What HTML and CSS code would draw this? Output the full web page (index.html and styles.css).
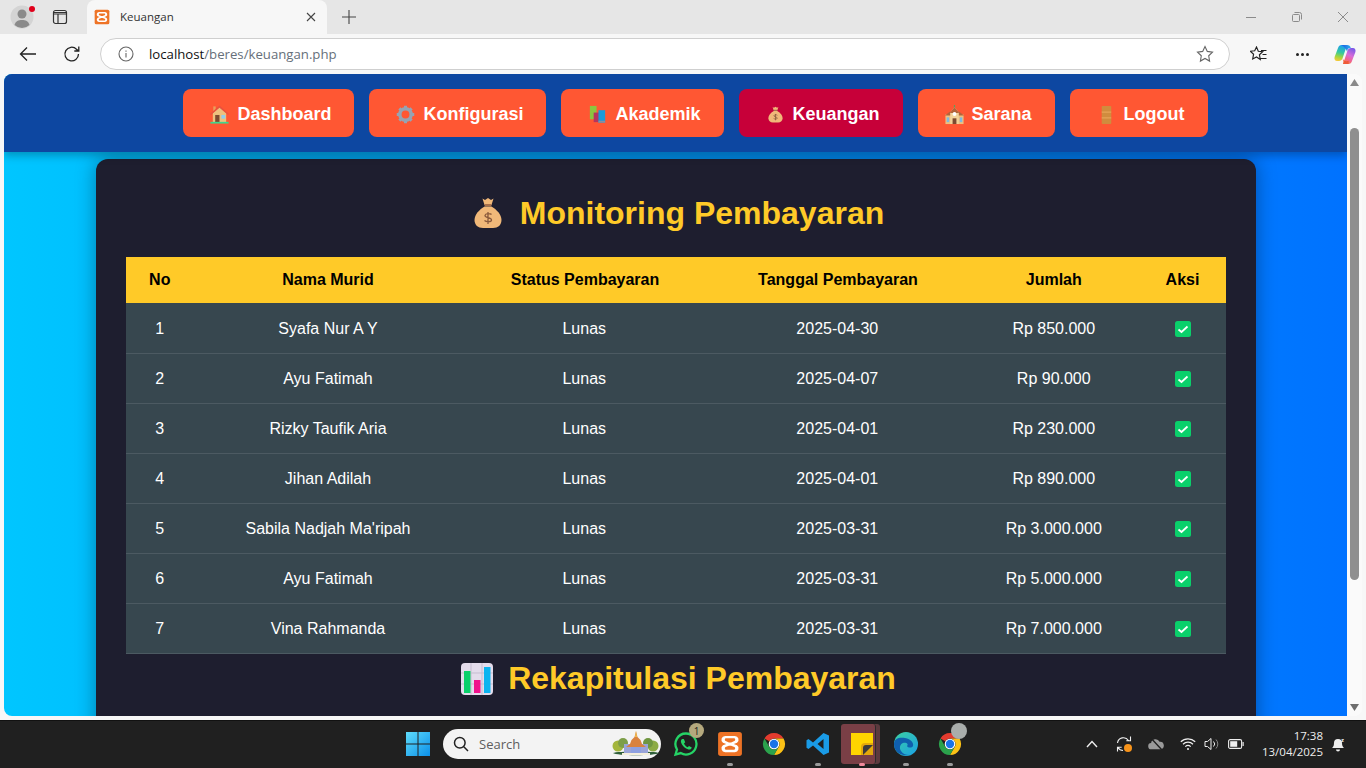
FILE: index.html
```html
<!DOCTYPE html>
<html lang="id">
<head>
<meta charset="utf-8">
<title>Keuangan</title>
<link rel="stylesheet" href="styles.css">
</head>
<body>
<svg class="defs" width="0" height="0" aria-hidden="true">
  <symbol id="xampp" viewBox="0 0 24 24">
    <rect x="1" y="1" width="22" height="22" rx="2.500" fill="#ee7326"/>
    <path d="M7.500 4.500h9a3.500 3.500 0 0 1 2 6.300L15.500 12l3 1.200a3.500 3.500 0 0 1-2 6.300h-9a3.500 3.500 0 0 1-2-6.300l3-1.200-3-1.200a3.500 3.500 0 0 1 2-6.300z M8 6.800a1.300 1.300 0 0 0 0 2.400l3 1.300h2l3-1.300a1.300 1.300 0 0 0 0-2.400z M11 13.500l-3 1.300a1.300 1.300 0 0 0 0 2.400h8a1.300 1.300 0 0 0 0-2.400l-3-1.300z" fill="#fff" fill-rule="evenodd"/>
  </symbol>
  <symbol id="chrome" viewBox="0 0 24 24">
    <path d="M12 1a11 11 0 0 1 9.530 5.500H12a5.500 5.500 0 0 0-4.760 2.750L2.470 6.500A11 11 0 0 1 12 1z" fill="#e33b2e"/>
    <path d="M21.530 6.500A11 11 0 0 1 12 23l4.760-8.250A5.500 5.500 0 0 0 16.760 9.250 5.500 5.500 0 0 0 12 6.500z" fill="#fbc116"/>
    <path d="M12 23A11 11 0 0 1 2.470 6.500l4.770 8.250A5.500 5.500 0 0 0 12 17.500a5.500 5.500 0 0 0 4.760-2.750z" fill="#2ba24c"/>
    <circle cx="12" cy="12" r="5.300" fill="#fff"/>
    <circle cx="12" cy="12" r="4.200" fill="#1a73e8"/>
  </symbol>
  <symbol id="check" viewBox="0 0 16 16">
    <rect x="0" y="0" width="16" height="16" rx="2.500" fill="#0ad06b"/>
    <path d="M3.500 8.500 6.500 11l6-5.500" fill="none" stroke="#fff" stroke-width="1.700"/>
  </symbol>
  <symbol id="bag" viewBox="0 0 32 32">
    <path d="M10.500 1.500 13 3l3-2 3 2 2.500-1.500L19.500 8h-7z" fill="#f0b879"/>
    <rect x="12.500" y="7" width="7" height="2.200" rx="1" fill="#a8704a"/>
    <path d="M12.500 9.500h7C24.500 12.500 29.500 17.500 29.500 23 29.500 28 26 31 21 31H11C6 31 2.500 28 2.500 23 2.500 17.500 7.500 12.500 12.500 9.500z" fill="#f0b879"/>
  </symbol>
</svg>

<div class="window">
  <header class="tabstrip">
    <div class="profile">
      <svg width="24" height="24" viewBox="0 0 24 24"><circle cx="12" cy="12" r="11.500" fill="#d4d4d4"/><circle cx="12" cy="9" r="4.500" fill="#8a8a8a"/><path d="M4.500 20c1-4 4-5 7.500-5s6.500 1 7.500 5a11 11 0 0 1-15 0z" fill="#8a8a8a"/></svg>
      <span class="profile-dot"></span>
    </div>
    <div class="strip-btn">
      <svg width="16" height="16" viewBox="0 0 16 16" fill="none" stroke="#333" stroke-width="1.200"><rect x="1.500" y="1.500" width="13" height="13" rx="2"/><path d="M1.500 3.500h13M1.500 5h13M6 5v9.500"/></svg>
    </div>
    <div class="tab">
      <svg class="tab-icon" width="16" height="16"><use href="#xampp"/></svg>
      <span class="tab-title">Keuangan</span>
      <svg width="10" height="10" viewBox="0 0 10 10" stroke="#444" stroke-width="1.100"><path d="M1 1l8 8M9 1l-8 8"/></svg>
    </div>
    <div class="new-tab">
      <svg width="14" height="14" viewBox="0 0 14 14" stroke="#444" stroke-width="1.100"><path d="M7 0v14M0 7h14"/></svg>
    </div>
    <div class="win-controls">
      <svg width="10" height="10" viewBox="0 0 10 10" stroke="#8b8b8b"><path d="M0 5.500h10"/></svg>
      <svg width="10" height="10" viewBox="0 0 10 10" fill="none" stroke="#8b8b8b"><rect x=".5" y="2.500" width="7" height="7" rx="1"/><path d="M2.500 .5h5a2 2 0 0 1 2 2v5"/></svg>
      <svg width="10" height="10" viewBox="0 0 10 10" stroke="#8b8b8b"><path d="M0 0l10 10M10 0L0 10"/></svg>
    </div>
  </header>

  <div class="toolbar">
    <svg class="tool-back" width="18" height="16" viewBox="0 0 18 16" fill="none" stroke="#222" stroke-width="1.300"><path d="M17 8H1.500M8 1.500 1.500 8 8 14.500"/></svg>
    <svg class="tool-reload" width="18" height="18" viewBox="0 0 18 18" fill="none" stroke="#222" stroke-width="1.300"><path d="M15.500 9a6.800 6.800 0 1 1-2-4.800L15.500 6M15.800 1.500V6h-4.500"/></svg>
    <div class="omnibox">
      <svg width="16" height="16" viewBox="0 0 16 16" fill="none" stroke="#666" stroke-width="1.100"><circle cx="8" cy="8" r="7"/><path d="M8 7v4.500M8 4.500v1.200"/></svg>
      <span class="url"><span class="url-host">localhost</span>/beres/keuangan.php</span>
      <svg class="omni-star" width="18" height="18" viewBox="0 0 18 18" fill="none" stroke="#666" stroke-width="1.100"><path d="M9 1.500l2.300 4.900 5.200.7-3.800 3.700.9 5.300L9 13.500l-4.600 2.600.9-5.300L1.500 7.100l5.200-.7z"/></svg>
    </div>
    <svg class="tool-fav" width="17" height="17" viewBox="0 0 17 17" fill="none" stroke="#222" stroke-width="1.150"><path d="M6.500 1l1.800 4.200 4.400.5-3.300 3 .9 4.800-3.800-2.500L2.700 13l.9-4.800-3.300-3 4.400-.5zM11 4.500h5.500M12.500 8.500h4M10.500 12.500h6"/></svg>
    <div class="tool-more"><span></span><span></span><span></span></div>
    <svg class="tool-copilot" width="22" height="21" viewBox="0 0 22 21">
      <defs>
        <linearGradient id="cpA" x1="0.500" y1="0" x2="0.300" y2="1"><stop offset="0" stop-color="#1c9cf0"/><stop offset=".45" stop-color="#34c8a0"/><stop offset=".75" stop-color="#a4d63c"/><stop offset="1" stop-color="#f6c93a"/></linearGradient>
        <linearGradient id="cpB" x1="0.700" y1="0" x2="0.300" y2="1"><stop offset="0" stop-color="#7a5ae8"/><stop offset=".45" stop-color="#d76cd8"/><stop offset=".75" stop-color="#f2648c"/><stop offset="1" stop-color="#f28a3c"/></linearGradient>
        <linearGradient id="cpC" x1="0" y1="0" x2="1" y2="0"><stop offset="0" stop-color="#1a55e0"/><stop offset="1" stop-color="#2fb0f0"/></linearGradient>
      </defs>
      <path d="M7.500 1H13L8.500 14.500C8 16 6.500 17 5 17H3C1 17 0 15 .6 13L4 4C4.600 2 5.800 1 7.500 1z" fill="url(#cpA)"/>
      <path d="M14.500 20H9l4.500-13.500C14 5 15.500 4 17 4h2c2 0 3 2 2.400 4L18 17c-.6 2-1.800 3-3.500 3z" fill="url(#cpB)"/>
      <path d="M7.500 1h5.500c2 0 3.500 1.200 3.800 3-2-.2-3 .6-3.400 2L13 7.500C12.500 5 10 2.500 7.500 1z" fill="url(#cpC)"/>
      <path d="M8.500 14.500c1 2 3 3 5.500 2.500l.7-.2-.2 3.200H9c1-1 .5-3.500-.5-5.500z" fill="#ef5a3a"/>
    </svg>
  </div>

  <div class="viewport">
    <main class="page">
      <nav class="nav">
        <a class="nav-btn">
          <svg class="emoji" viewBox="0 0 22 20"><rect x="4.500" y="1.500" width="2.500" height="5" fill="#e9a05c"/><path d="M4 8.500 11 2.500l7 6V18H4z" fill="#eec07e"/><path d="M1.500 10 11 1.800 20.500 10" fill="none" stroke="#e8523f" stroke-width="1.700"/><rect x="6.500" y="10.500" width="4.500" height="7.500" fill="#7c4a30"/><rect x="13" y="10.500" width="4" height="3.800" fill="#8fcdf0"/><rect x="1.500" y="17.700" width="19" height="1.800" fill="#3fd68c"/></svg>
          <span>Dashboard</span>
        </a>
        <a class="nav-btn">
          <svg class="emoji" viewBox="-1 -1 24 24"><circle cx="11" cy="11" r="6.500" fill="none" stroke="#97a3b2" stroke-width="4"/><path d="M11 1v20M1 11h20M4 4l14 14M18 4 4 18" stroke="#97a3b2" stroke-width="3.400" stroke-dasharray="3.500 13.300"/><circle cx="11" cy="11" r="3" fill="#ff5733"/></svg>
          <span>Konfigurasi</span>
        </a>
        <a class="nav-btn">
          <svg class="emoji" viewBox="0 0 22 22"><rect x="3" y="2" width="7" height="14" fill="#8cc63f"/><rect x="7" y="9" width="7" height="10" fill="#b5355e"/><rect x="12" y="6.500" width="7" height="13" fill="#1a9bd8"/><rect x="12" y="17.500" width="7" height="2" fill="#8a8fa0"/></svg>
          <span>Akademik</span>
        </a>
        <a class="nav-btn nav-btn-active">
          <svg class="emoji" viewBox="-4 -2 40 36"><use href="#bag" width="32" height="32"/><path d="M16 15v12M19.500 17.500c-1-1.300-6-1.500-6.500.8-.4 2.800 6.500 1.700 6.500 4.700 0 2.200-5.300 2.200-7 .5" fill="none" stroke="#8a5a3c" stroke-width="1.500"/></svg>
          <span>Keuangan</span>
        </a>
        <a class="nav-btn">
          <svg class="emoji" viewBox="0 0 22 22"><path d="M11 1v4" stroke="#58a55c" stroke-width="1.200"/><rect x="1.500" y="11" width="19" height="10" fill="#eec07e"/><path d="M1 12l5-4h10l5 4z" fill="#b4633a"/><path d="M11 3.500 6.500 9v12h9V9z" fill="#f3d29a"/><path d="M11 3.500 6 9.500h10z" fill="#b4633a"/><circle cx="11" cy="10.500" r="2" fill="#fff"/><rect x="2.800" y="14" width="2.700" height="5" fill="#7fb8e0"/><rect x="16.500" y="14" width="2.700" height="5" fill="#7fb8e0"/><rect x="9" y="15" width="4" height="6" fill="#7c4a30"/></svg>
          <span>Sarana</span>
        </a>
        <a class="nav-btn">
          <svg class="emoji" viewBox="0 0 22 22"><rect x="6" y="2" width="10" height="19" rx="1" fill="#d08c3e"/><path d="M6 8.500h10M6 14.500h10" stroke="#e6a257" stroke-width="1.200"/></svg>
          <span>Logout</span>
        </a>
      </nav>

      <section class="card">
        <h2 class="title">
          <svg class="title-icon" viewBox="0 0 32 32"><use href="#bag" width="32" height="32"/><path d="M16 15v12M19.500 17.500c-1-1.300-6-1.500-6.500.8-.4 2.800 6.500 1.700 6.500 4.700 0 2.200-5.300 2.200-7 .5" fill="none" stroke="#8a5a3c" stroke-width="1.300"/></svg>
          <span>Monitoring Pembayaran</span>
        </h2>
        <table class="table">
          <colgroup>
            <col class="c-no"><col class="c-name"><col class="c-status"><col class="c-date"><col class="c-sum"><col class="c-act">
          </colgroup>
          <thead>
            <tr><th>No</th><th>Nama Murid</th><th>Status Pembayaran</th><th>Tanggal Pembayaran</th><th>Jumlah</th><th>Aksi</th></tr>
          </thead>
          <tbody>
            <tr><td>1</td><td>Syafa Nur A Y</td><td class="nudge">Lunas</td><td class="nudge">2025-04-30</td><td>Rp 850.000</td><td><svg class="check" width="16" height="16"><use href="#check"/></svg></td></tr>
            <tr><td>2</td><td>Ayu Fatimah</td><td class="nudge">Lunas</td><td class="nudge">2025-04-07</td><td>Rp 90.000</td><td><svg class="check" width="16" height="16"><use href="#check"/></svg></td></tr>
            <tr><td>3</td><td>Rizky Taufik Aria</td><td class="nudge">Lunas</td><td class="nudge">2025-04-01</td><td>Rp 230.000</td><td><svg class="check" width="16" height="16"><use href="#check"/></svg></td></tr>
            <tr><td>4</td><td>Jihan Adilah</td><td class="nudge">Lunas</td><td class="nudge">2025-04-01</td><td>Rp 890.000</td><td><svg class="check" width="16" height="16"><use href="#check"/></svg></td></tr>
            <tr><td>5</td><td>Sabila Nadjah Ma'ripah</td><td class="nudge">Lunas</td><td class="nudge">2025-03-31</td><td>Rp 3.000.000</td><td><svg class="check" width="16" height="16"><use href="#check"/></svg></td></tr>
            <tr><td>6</td><td>Ayu Fatimah</td><td class="nudge">Lunas</td><td class="nudge">2025-03-31</td><td>Rp 5.000.000</td><td><svg class="check" width="16" height="16"><use href="#check"/></svg></td></tr>
            <tr><td>7</td><td>Vina Rahmanda</td><td class="nudge">Lunas</td><td class="nudge">2025-03-31</td><td>Rp 7.000.000</td><td><svg class="check" width="16" height="16"><use href="#check"/></svg></td></tr>
          </tbody>
        </table>
        <h2 class="title title-second">
          <svg class="title-icon" viewBox="0 0 32 32"><rect x="0" y="0" width="32" height="32" rx="4" fill="#e4dcec"/><path d="M0 10h32M0 21h32M10 0v32M21 0v32" stroke="#c5bdd0" stroke-width="1"/><rect x="3" y="8" width="6.500" height="22" fill="#0ad06b"/><rect x="13" y="17" width="6.500" height="13" fill="#f0128c"/><rect x="23" y="4" width="6.500" height="26" fill="#0bb4f0"/></svg>
          <span>Rekapitulasi Pembayaran</span>
        </h2>
      </section>
    </main>
    <aside class="scrollbar">
      <svg class="sb-arrow" width="9" height="7" viewBox="0 0 9 7"><path d="M4.500 0 9 7H0z" fill="#8a8a8a"/></svg>
      <div class="sb-track"><div class="sb-thumb"></div></div>
      <svg class="sb-arrow" width="9" height="7" viewBox="0 0 9 7"><path d="M0 0h9L4.500 7z" fill="#6e6e6e"/></svg>
    </aside>
  </div>

  <footer class="taskbar">
    <svg class="start" width="24" height="24" viewBox="0 0 24 24"><defs><linearGradient id="winG" x1="0" y1="0" x2="1" y2="1"><stop offset="0" stop-color="#5fdcfb"/><stop offset="1" stop-color="#0b8fe8"/></linearGradient></defs><path d="M0 0h11.500v11.500H0zM12.500 0H24v11.500H12.500zM0 12.500h11.500V24H0zM12.500 12.500H24V24H12.500z" fill="url(#winG)"/></svg>
    <div class="search">
      <svg width="16" height="16" viewBox="0 0 16 16" fill="none" stroke="#222" stroke-width="1.500"><circle cx="6.800" cy="6.800" r="5.300"/><path d="M10.800 10.800 15 15"/></svg>
      <span class="search-text">Search</span>
      <svg class="search-art" width="48" height="26" viewBox="0 0 48 26">
        <path d="M1 22c4-2 42-2 46 0-3 3-43 3-46 0z" fill="#2f5f3a"/>
        <circle cx="6" cy="15" r="5.500" fill="#a4b63c"/><circle cx="11" cy="12" r="5" fill="#7d9e49"/>
        <circle cx="41" cy="15" r="5.500" fill="#8cab44"/><circle cx="36" cy="12" r="5" fill="#6f9640"/>
        <rect x="12" y="13" width="24" height="9" fill="#9aa4d8"/>
        <path d="M24 0l1.500 6 3 3 1.500 4 4 3H14l4-3 1.500-4 3-3z" fill="#d9823f"/>
        <path d="M24 0l1 6h-2z" fill="#f2c14e"/>
        <rect x="19" y="16" width="10" height="6" fill="#8ea0e0"/>
        <path d="M10 22h28v2H10z" fill="#f5efdc"/>
      </svg>
    </div>
    <div class="tray-apps">
      <div class="app">
        <svg width="26" height="26" viewBox="0 0 26 26" fill="none"><path d="M13 2.500A10.500 10.500 0 0 0 4 18.500L2.500 23.500l5.200-1.400A10.500 10.500 0 1 0 13 2.500z" stroke="#25d366" stroke-width="2.300"/><path d="M9 8c-1.500 1-1.500 3 0 5.500s4 4.500 6.500 5c2 .3 3-.8 3.300-2l-2.800-1.500-1.300 1.300c-1.500-.6-3-2.100-3.700-3.800l1.200-1.200L10.800 8z" fill="#25d366"/></svg>
        <span class="badge">1</span>
      </div>
      <div class="app"><svg width="26" height="26"><use href="#xampp"/></svg><span class="dot"></span></div>
      <div class="app"><svg width="24" height="24"><use href="#chrome"/></svg></div>
      <div class="app">
        <svg width="24" height="24" viewBox="0 0 24 24"><path d="M17.500 1 23 3.500v17L17.500 23 7 13.500 2.500 17 .5 15.800V8.200L2.500 7 7 10.500zM17.500 7l-6 5 6 5z" fill="#1a9be6" fill-rule="evenodd"/></svg>
        <span class="dot"></span>
      </div>
      <div class="app app-active">
        <span class="app-edge"></span>
        <span class="app-tile"></span>
        <svg class="app-glyph" width="24" height="24" viewBox="0 0 24 24"><path d="M1 1h22v22H1z" fill="#ffd400"/><path d="M23 11v12H11V15a4 4 0 0 1 4-4z" fill="#e3a80c"/><path d="M23 13h-7a3 3 0 0 0-3 3v7z" fill="#3b3b3b"/></svg>
        <span class="dot dot-active"></span>
      </div>
      <div class="app">
        <svg width="26" height="26" viewBox="0 0 26 26"><defs><linearGradient id="edgeA" x1="0" y1="0" x2="1" y2="1"><stop offset="0" stop-color="#3cd0a0"/><stop offset="1" stop-color="#1aa0e8"/></linearGradient></defs><circle cx="13" cy="13" r="12" fill="url(#edgeA)"/><path d="M1 13C1 7 7 6 12 7c6 1 9 5 8 8-1 2-5 2-6 0 2-2-1-4-4-3-3 1-4 5-2 8 2 3 5 4 8 4C6 25 1 20 1 13z" fill="#0f5fae"/></svg>
        <span class="dot"></span>
      </div>
      <div class="app">
        <svg width="24" height="24"><use href="#chrome"/></svg>
        <span class="badge badge-gray"></span>
        <span class="dot"></span>
      </div>
    </div>
    <div class="tray">
      <svg class="t-chev" width="12" height="8" viewBox="0 0 12 8" fill="none" stroke="#eee" stroke-width="1.400"><path d="M1 7l5-5.500L11 7"/></svg>
      <div class="t-sync">
        <svg width="16" height="18" viewBox="0 0 16 18" fill="none" stroke="#eee" stroke-width="1.100"><path d="M1.500 8a6 6 0 0 1 11-2.500M14.500 1.500v4.200h-4.200M1.500 16.500v-4.200h4.200M2 12.500A6 6 0 0 0 7 15.500"/></svg>
        <span class="t-sync-dot"></span>
      </div>
      <svg class="t-cloud" width="16" height="14" viewBox="0 0 18 14"><path d="M4 13a3.500 3.500 0 0 1-.5-7A5 5 0 0 1 13 4.500 4.200 4.200 0 0 1 14 13z" fill="#9a9a9a"/><path d="M3 0l13 14" stroke="#202020" stroke-width="1.500"/></svg>
      <svg class="t-wifi" width="16" height="14" viewBox="0 0 16 14" fill="none" stroke="#eee" stroke-width="1.200"><path d="M.8 4.800a10.300 10.300 0 0 1 14.400 0M3 7.200a7.200 7.200 0 0 1 10 0M5.300 9.600a4 4 0 0 1 5.400 0"/><circle cx="8" cy="12" r="1" fill="#eee" stroke="none"/></svg>
      <svg class="t-vol" width="16" height="14" viewBox="0 0 16 14" fill="none" stroke="#eee" stroke-width="1"><path d="M1 4.500h2.500L7 1.500v11l-3.500-3H1z"/><path d="M9.500 4.500a3.500 3.500 0 0 1 0 5"/><path d="M12 2.500a6.500 6.500 0 0 1 0 9" stroke="#8a8a8a"/></svg>
      <svg class="t-bat" width="16" height="10" viewBox="0 0 16 10"><rect x=".6" y=".6" width="13" height="8.800" rx="1.500" fill="none" stroke="#eee" stroke-width="1.100"/><rect x="2.200" y="2.200" width="7" height="5.600" fill="#eee"/><rect x="14.500" y="3" width="1.200" height="4" fill="#eee"/></svg>
      <div class="clock"><span>17:38</span><span>13/04/2025</span></div>
      <svg class="t-bell" width="14" height="16" viewBox="0 0 14 16"><path d="M6 3a4 4 0 0 0-4 4c0 3-1 4-2 5h12c-1-1-2-2-2-5a4 4 0 0 0-4-4zM4 13.500h4a2 2 0 0 1-4 0z" fill="#eee"/><text class="t-bell-z" x="9" y="6">z</text></svg>
    </div>
  </footer>
</div>
</body>
</html>
```
FILE: styles.css
```css
* { box-sizing: border-box; }
html, body { margin: 0; padding: 0; height: 100%; overflow: hidden; }
body { font-family: "Liberation Sans", Arial, sans-serif; }
.defs { display: block; height: 0; }

.window { width: 1366px; height: 768px; display: flex; flex-direction: column; background: #f7f7f7; overflow: hidden; }

/* Browser tab strip */
.tabstrip { height: 34px; flex: none; background: #e6e6e6; display: flex; align-items: center; padding: 0 0 0 10px; }
.profile { position: relative; width: 24px; height: 24px; flex: none; }
.profile-dot { position: absolute; top: 1px; right: -1px; width: 6px; height: 6px; border-radius: 50%; background: #e0001b; }
.strip-btn { width: 16px; height: 16px; margin-left: 18px; flex: none; }
.tab { height: 34px; width: 240px; margin-left: 19px; background: #f7f7f7; border-radius: 8px 8px 0 0; display: flex; align-items: center; padding: 0 11px 0 7px; align-self: flex-end; flex: none; }
.tab-icon { flex: none; }
.tab-title { flex: 1; margin: 0 0 2px 10px; font: 400 11.500px "Open Sans", sans-serif; color: #333; }
.new-tab { margin-left: 15px; width: 14px; height: 14px; flex: none; display: flex; }
.win-controls { margin-left: auto; display: flex; gap: 36px; padding-right: 18px; }

/* Toolbar */
.toolbar { height: 40px; flex: none; background: #f7f7f7; display: flex; align-items: center; }
.tool-back { margin-left: 19px; flex: none; }
.tool-reload { margin-left: 26px; flex: none; }
.omnibox { width: 1130px; height: 32px; margin-left: 19px; flex: none; background: #fff; border: 1px solid #cfcfcf; border-radius: 16px; display: flex; align-items: center; padding: 0 15px 0 17px; }
.url { margin-left: 15px; font: 400 13.200px "Open Sans", sans-serif; color: #666f7a; flex: 1; }
.url-host { color: #111; }
.omni-star { flex: none; }
.tool-fav { margin-left: 20px; flex: none; }
.tool-more { margin-left: 29px; display: flex; gap: 2px; flex: none; }
.tool-more span { width: 3px; height: 3px; border-radius: 50%; background: #222; }
.tool-copilot { margin-left: 25px; flex: none; }

/* Rendered page */
.viewport { flex: none; height: 642px; margin: 0 4px 4px; display: flex; border-radius: 8px; overflow: hidden; background: #fafafa; }
.page { width: 1343px; flex: none; height: 100%; overflow: hidden; background: linear-gradient(to right, #00c6ff, #0072ff); }
.nav { position: relative; z-index: 1; height: 78px; background: #0d47a1; display: flex; justify-content: center; gap: 15px; padding: 15px 0 15px 40px; box-shadow: 0 4px 8px rgba(0, 0, 0, .25); }
.nav-btn { height: 48px; padding: 2px 23px 0 26px; background: #ff5733; border-radius: 8px; display: flex; align-items: center; color: #fff; font-weight: 700; font-size: 18px; white-space: nowrap; }
.nav-btn-active { background: #c70039; }
.emoji { width: 21px; height: 21px; margin-right: 7px; flex: none; }

.card { width: 1160px; height: 600px; margin: 7px auto 0; padding: 30px; background: #1e1e2f; border-radius: 12px; box-shadow: 0 0 20px rgba(0, 0, 0, .35); }
.title { margin: 0 0 20px; height: 48px; display: flex; justify-content: center; align-items: center; color: #ffca28; font-size: 32px; font-weight: 700; }
.title-icon { width: 32px; height: 32px; margin: 0 16px 0 5px; flex: none; }
.title-second { margin: 1px 0 0; }
.title-second .title-icon { margin: 0 15px 0 6px; }

.table { width: 1100px; border-collapse: collapse; table-layout: fixed; font-size: 16px; }
.c-no { width: 68.500px; }
.c-name { width: 268px; }
.c-status { width: 246px; }
.c-date { width: 260px; }
.c-sum { width: 171.500px; }
.c-act { width: 86px; }
.table th { height: 46px; background: #ffca28; color: #000; text-align: center; font-weight: 700; padding: 0; }
.table td { height: 50px; background: #37474f; color: #fff; text-align: center; padding: 2px 0 0; border-bottom: 1px solid #4c5a62; }
.table td.nudge { padding-right: 1.500px; }
.check { display: block; margin: 0 auto; }

/* Scrollbar */
.scrollbar { width: 15px; flex: none; display: flex; flex-direction: column; align-items: center; background: #fafafa; padding: 5px 0; }
.sb-arrow { flex: none; }
.sb-track { flex: 1; width: 9px; padding-top: 42px; }
.sb-thumb { height: 452px; background: #8f8f8f; border-radius: 5px; }

/* Windows taskbar */
.taskbar { height: 48px; flex: none; background: #202020; border-top: 1px solid #111; display: flex; align-items: center; padding: 0 0 1px 406px; }
.start { flex: none; }
.search { width: 218px; height: 30px; margin-left: 13px; background: #f3f3f3; border-radius: 15px; display: flex; align-items: center; padding: 0 1px 0 10px; flex: none; }
.search-text { margin-left: 10px; flex: 1; font: 400 13px "Open Sans", sans-serif; color: #5d5d5d; }
.tray-apps { display: flex; margin-left: 3px; flex: none; }
.app { position: relative; width: 44px; height: 46px; display: flex; align-items: center; justify-content: center; }
.app-edge { position: absolute; top: 3px; bottom: 3px; left: 3px; width: 37px; border-radius: 3px; background: #5c3a3e; }
.app-tile { position: absolute; top: 3px; bottom: 3px; left: 1px; width: 35px; border-radius: 3px; background: #7a3f46; border-right: 1px solid #2c2c2c; }
.app-glyph { position: relative; }
.dot { position: absolute; bottom: 1px; left: 19px; width: 6px; height: 3px; border-radius: 2px; background: #9a9a9a; }
.dot-active { background: #f08a9c; }
.badge { position: absolute; top: 2px; right: 4px; width: 15px; height: 15px; border-radius: 50%; background: #b5a97e; color: #222; font: 400 10px "Open Sans", sans-serif; display: flex; align-items: center; justify-content: center; }
.badge-gray { background: #a9adab; width: 16px; height: 16px; right: 5px; }

.tray { margin-left: auto; display: flex; align-items: center; padding-right: 20px; }
.t-chev { margin-right: 18px; }
.t-sync { position: relative; width: 16px; height: 18px; margin-right: 16px; }
.t-sync-dot { position: absolute; right: 0; bottom: 1px; width: 8px; height: 8px; border-radius: 50%; background: #f7931a; }
.t-cloud { margin-right: 16px; }
.t-wifi { margin-right: 8px; }
.t-vol { margin-right: 8px; }
.t-bat { flex: none; }
.clock { display: flex; flex-direction: column; align-items: flex-end; font: 400 11.500px "Open Sans", sans-serif; color: #eee; line-height: 16px; width: 79px; }
.t-bell { margin-left: 9px; }
.t-bell-z { font: 700 6px "Open Sans", sans-serif; fill: #eee; }
```
